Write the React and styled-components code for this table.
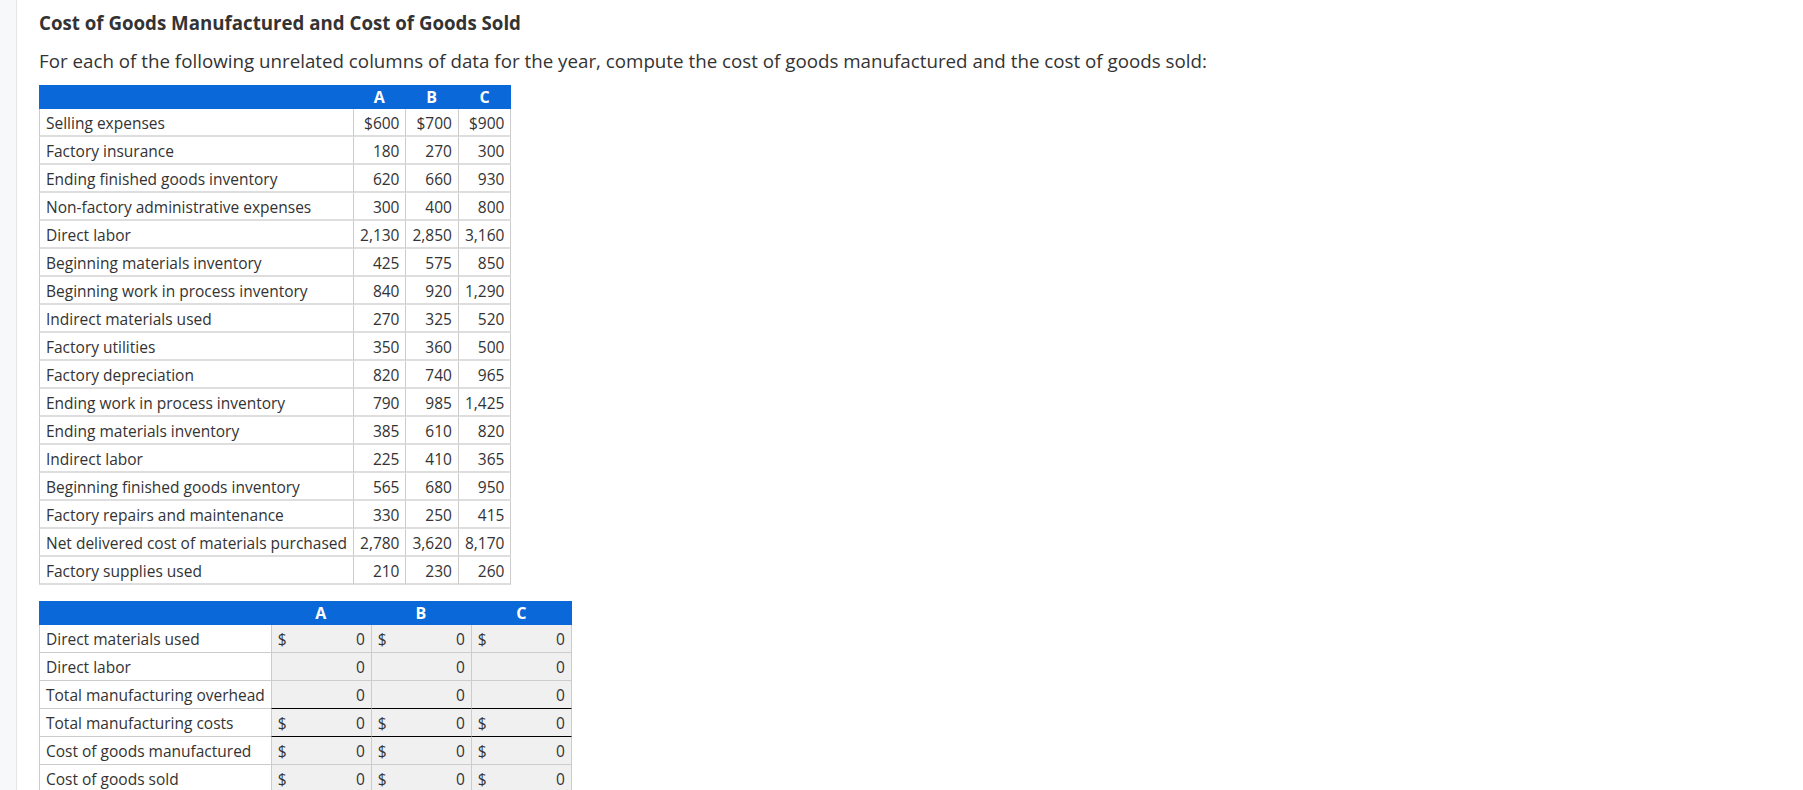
import React from "react";
import styled, { createGlobalStyle } from "styled-components";

const dataRows = [
  ["Selling expenses", "$600", "$700", "$900"],
  ["Factory insurance", "180", "270", "300"],
  ["Ending finished goods inventory", "620", "660", "930"],
  ["Non-factory administrative expenses", "300", "400", "800"],
  ["Direct labor", "2,130", "2,850", "3,160"],
  ["Beginning materials inventory", "425", "575", "850"],
  ["Beginning work in process inventory", "840", "920", "1,290"],
  ["Indirect materials used", "270", "325", "520"],
  ["Factory utilities", "350", "360", "500"],
  ["Factory depreciation", "820", "740", "965"],
  ["Ending work in process inventory", "790", "985", "1,425"],
  ["Ending materials inventory", "385", "610", "820"],
  ["Indirect labor", "225", "410", "365"],
  ["Beginning finished goods inventory", "565", "680", "950"],
  ["Factory repairs and maintenance", "330", "250", "415"],
  ["Net delivered cost of materials purchased", "2,780", "3,620", "8,170"],
  ["Factory supplies used", "210", "230", "260"],
];

const answerRows = [
  { label: "Direct materials used", dollar: true },
  { label: "Direct labor", dollar: false },
  { label: "Total manufacturing overhead", dollar: false, rule: true },
  { label: "Total manufacturing costs", dollar: true, rule: true },
  { label: "Cost of goods manufactured", dollar: true },
  { label: "Cost of goods sold", dollar: true },
];

const columns = ["A", "B", "C"];

function App() {
  return (
    <>
      <GlobalStyle />
      <Page>
        <Sidebar />
        <Content>
          <Title>Cost of Goods Manufactured and Cost of Goods Sold</Title>
          <Prompt>
            For each of the following unrelated columns of data for the year,
            compute the cost of goods manufactured and the cost of goods sold:
          </Prompt>

          <DataTable>
            <thead>
              <tr>
                <HeadCell />
                {columns.map((c) => (
                  <HeadCell key={c}>{c}</HeadCell>
                ))}
              </tr>
            </thead>
            <tbody>
              {dataRows.map(([label, ...values]) => (
                <tr key={label}>
                  <LabelCell>{label}</LabelCell>
                  {values.map((v, i) => (
                    <NumCell key={i}>{v}</NumCell>
                  ))}
                </tr>
              ))}
            </tbody>
          </DataTable>

          <AnswerTable>
            <thead>
              <tr>
                <HeadCell />
                {columns.map((c) => (
                  <HeadCell key={c}>{c}</HeadCell>
                ))}
              </tr>
            </thead>
            <tbody>
              {answerRows.map((row) => (
                <tr key={row.label}>
                  <AnswerLabel>{row.label}</AnswerLabel>
                  {columns.map((c) => (
                    <InputCell key={c} $rule={row.rule}>
                      <InputBox>
                        <span>{row.dollar ? "$" : ""}</span>
                        <span>0</span>
                      </InputBox>
                    </InputCell>
                  ))}
                </tr>
              ))}
            </tbody>
          </AnswerTable>
        </Content>
      </Page>
    </>
  );
}

const GlobalStyle = createGlobalStyle`
  body {
    margin: 0;
    background: #fff;
    font-family: "Open Sans", "DejaVu Sans", sans-serif;
    color: #333;
  }
`;

const Page = styled.div`
  display: flex;
  min-height: 100vh;
`;

const Sidebar = styled.div`
  width: 16px;
  flex-shrink: 0;
  background: #f7f8fa;
  border-right: 1px solid #e3e5e8;
`;

const Content = styled.div`
  flex: 1;
  padding: 11px 0 0 22px;
`;

const Title = styled.h3`
  margin: 0;
  font-size: 18.7px;
  line-height: 24px;
  font-weight: 700;
  color: #333;
`;

const Prompt = styled.p`
  margin: 14px 0 12px;
  font-size: 18.75px;
  line-height: 24px;
  color: #333;
`;

const DataTable = styled.table`
  border-collapse: separate;
  border-spacing: 0;
  font-size: 15.5px;
  color: #333;
`;

const HeadCell = styled.th`
  background: #0a68d8;
  color: #fff;
  font-weight: 700;
  font-size: 16px;
  line-height: 24px;
  height: 24px;
  padding: 0 6px;
  text-align: center;
`;

const LabelCell = styled.td`
  padding: 3px 6px 1px;
  line-height: 22px;
  white-space: nowrap;
  border-left: 1px solid #cccccc;
  border-bottom: 2px solid #dedede;
`;

const NumCell = styled.td`
  padding: 3px 6px 1px;
  line-height: 22px;
  text-align: right;
  white-space: nowrap;
  border-left: 1px solid #cccccc;
  border-bottom: 2px solid #dedede;

  &:last-child {
    border-right: 1px solid #cccccc;
  }
`;

const AnswerTable = styled.table`
  margin-top: 16px;
  border-collapse: separate;
  border-spacing: 0;
  font-size: 15.5px;
  color: #333;
`;

const AnswerLabel = styled.td`
  padding: 3px 6px 2px;
  line-height: 22px;
  white-space: nowrap;
  border-left: 1px solid #cccccc;
  border-bottom: 1px solid #cccccc;
`;

const InputCell = styled.td`
  width: 87px;
  padding: 3px 6px 2px;
  line-height: 22px;
  background: #f0f0f0;
  border-left: 1px solid #cccccc;
  border-bottom: 1px solid ${(p) => (p.$rule ? "#000" : "#cccccc")};

  &:last-child {
    border-right: 1px solid #cccccc;
  }
`;

const InputBox = styled.div`
  display: flex;
  justify-content: space-between;
`;

export default App;
